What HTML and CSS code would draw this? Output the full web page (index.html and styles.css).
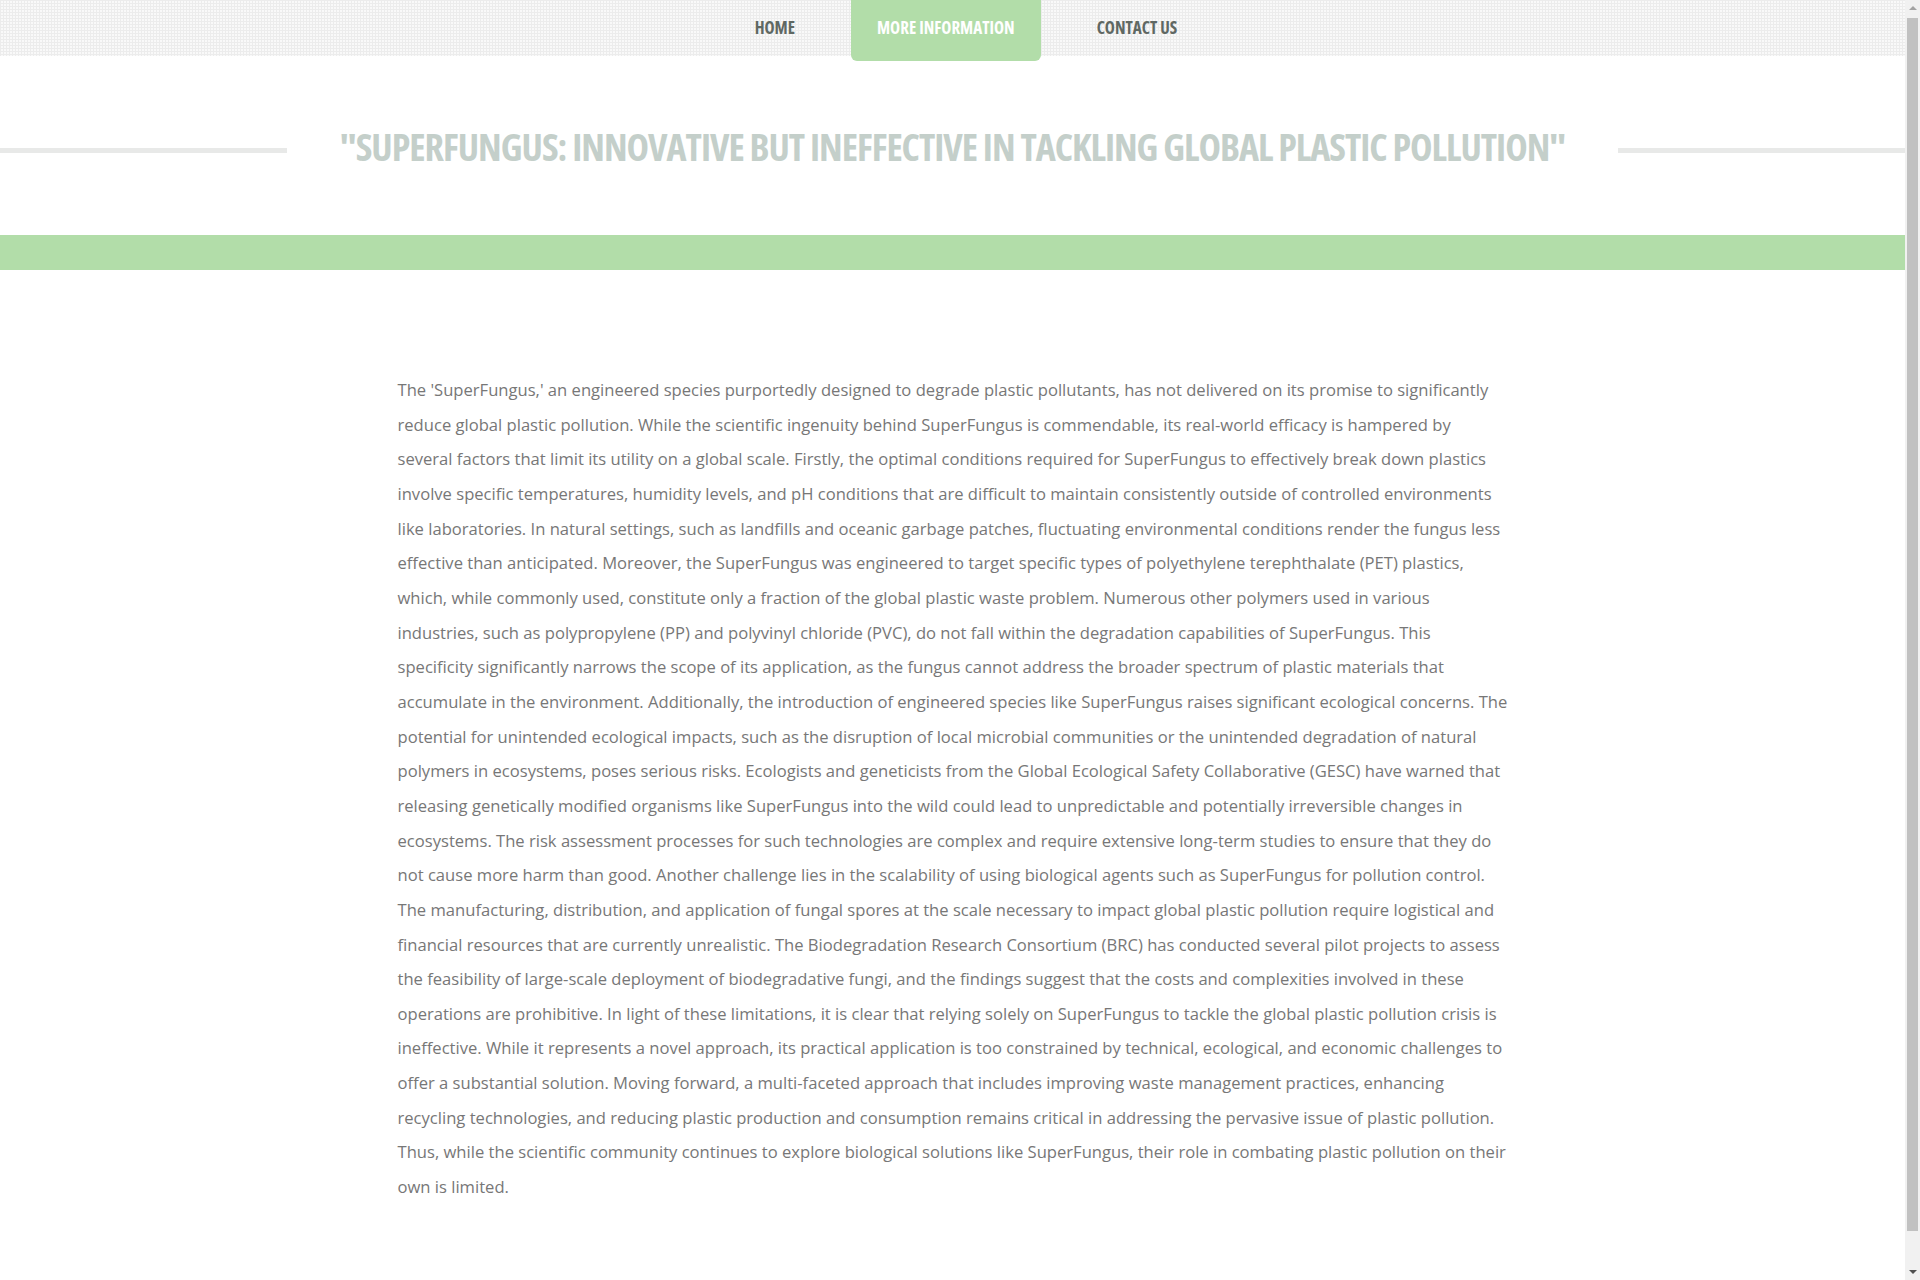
FILE: index.html
```html
<!DOCTYPE html>
<html lang="en">
<head>
<meta charset="utf-8">
<title>SuperFungus</title>
<link rel="stylesheet" href="styles.css">
</head>
<body>
<div class="page">
  <header class="topbar">
    <nav class="nav">
      <ul class="menu">
        <li class="menu-item"><a href="#">HOME</a></li>
        <li class="menu-item active"><a href="#">MORE INFORMATION</a></li>
        <li class="menu-item"><a href="#">CONTACT US</a></li>
      </ul>
    </nav>
  </header>
  <section class="title-row">
    <span class="rule"></span>
    <h1 class="title">"SUPERFUNGUS: INNOVATIVE BUT INEFFECTIVE IN TACKLING GLOBAL PLASTIC POLLUTION"</h1>
    <span class="rule"></span>
  </section>
  <div class="band"></div>
  <main class="content">
    <p>The 'SuperFungus,' an engineered species purportedly designed to degrade plastic pollutants, has not delivered on its promise to significantly reduce global plastic pollution. While the scientific ingenuity behind SuperFungus is commendable, its real-world efficacy is hampered by several factors that limit its utility on a global scale. Firstly, the optimal conditions required for SuperFungus to effectively break down plastics involve specific temperatures, humidity levels, and pH conditions that are difficult to maintain consistently outside of controlled environments like laboratories. In natural settings, such as landfills and oceanic garbage patches, fluctuating environmental conditions render the fungus less effective than anticipated. Moreover, the SuperFungus was engineered to target specific types of polyethylene terephthalate (PET) plastics, which, while commonly used, constitute only a fraction of the global plastic waste problem. Numerous other polymers used in various industries, such as polypropylene (PP) and polyvinyl chloride (PVC), do not fall within the degradation capabilities of SuperFungus. This specificity significantly narrows the scope of its application, as the fungus cannot address the broader spectrum of plastic materials that accumulate in the environment. Additionally, the introduction of engineered species like SuperFungus raises significant ecological concerns. The potential for unintended ecological impacts, such as the disruption of local microbial communities or the unintended degradation of natural polymers in ecosystems, poses serious risks. Ecologists and geneticists from the Global Ecological Safety Collaborative (GESC) have warned that releasing genetically modified organisms like SuperFungus into the wild could lead to unpredictable and potentially irreversible changes in ecosystems. The risk assessment processes for such technologies are complex and require extensive long-term studies to ensure that they do not cause more harm than good. Another challenge lies in the scalability of using biological agents such as SuperFungus for pollution control. The manufacturing, distribution, and application of fungal spores at the scale necessary to impact global plastic pollution require logistical and financial resources that are currently unrealistic. The Biodegradation Research Consortium (BRC) has conducted several pilot projects to assess the feasibility of large-scale deployment of biodegradative fungi, and the findings suggest that the costs and complexities involved in these operations are prohibitive. In light of these limitations, it is clear that relying solely on SuperFungus to tackle the global plastic pollution crisis is ineffective. While it represents a novel approach, its practical application is too constrained by technical, ecological, and economic challenges to offer a substantial solution. Moving forward, a multi-faceted approach that includes improving waste management practices, enhancing recycling technologies, and reducing plastic production and consumption remains critical in addressing the pervasive issue of plastic pollution. Thus, while the scientific community continues to explore biological solutions like SuperFungus, their role in combating plastic pollution on their own is limited.</p>
  </main>
</div>
<div class="scrollbar" aria-hidden="true">
  <span class="sb-arrow sb-up"></span>
  <span class="sb-thumb"></span>
  <span class="sb-arrow sb-down"></span>
</div>
</body>
</html>
```
FILE: styles.css
```css
html, body {
  margin: 0;
  padding: 0;
  background: #ffffff;
}
body {
  font-family: "Open Sans", "Liberation Sans", sans-serif;
  color: #777777;
}
.page {
  margin-right: 15px;
}
.topbar {
  height: 56px;
  background-color: #f9f9f9;
  background-image:
    linear-gradient(to right, #ececec 1px, transparent 1px),
    linear-gradient(to bottom, #ececec 1px, transparent 1px);
  background-size: 3px 3px;
}
.nav {
  display: flex;
  justify-content: center;
  padding-left: 27px;
}
.menu {
  list-style: none;
  margin: 0;
  padding: 0;
  display: flex;
  gap: 30px;
}
.menu-item a {
  display: block;
  height: 61px;
  box-sizing: border-box;
  padding: 18px 26px 0;
  line-height: 20px;
  font-size: 17px;
  font-weight: 700;
  font-stretch: 75%;
  color: #5f6863;
  text-decoration: none;
}
.menu-item.active a {
  background: #b2dda9;
  color: #ffffff;
  border-radius: 0 0 6px 6px;
}
.title-row {
  display: flex;
  align-items: flex-start;
  margin-top: 66px;
}
.rule {
  flex: 1;
  height: 5px;
  margin-top: 26px;
  background: #e8e9e8;
}
.title {
  margin: 0 53px;
  font-size: 38px;
  line-height: 48px;
  font-weight: 700;
  font-stretch: 75%;
  letter-spacing: -1px;
  color: #c4cfca;
  white-space: nowrap;
}
.band {
  height: 35px;
  margin-top: 65px;
  background: #b2dda9;
}
.content {
  width: 1110px;
  margin: 103px auto 0;
  padding-bottom: 114px;
}
.content p {
  margin: 0;
  font-size: 16.6px;
  font-kerning: none;
  line-height: 34.66px;
  color: #777777;
}
.scrollbar {
  position: fixed;
  top: 0;
  right: 0;
  bottom: 0;
  width: 15px;
  background: #f1f1f1;
  display: flex;
  flex-direction: column;
  align-items: center;
}
.sb-arrow {
  width: 0;
  height: 0;
  border-left: 4px solid transparent;
  border-right: 4px solid transparent;
  margin: 5px 0;
}
.sb-up {
  border-bottom: 4px solid #a3a3a3;
  margin-top: 6px;
}
.sb-down {
  border-top: 4px solid #505050;
  margin-bottom: 6px;
}
.sb-thumb {
  width: 11px;
  flex: 1;
  margin: 3px 0 34px;
  background: #c1c1c1;
}
```
